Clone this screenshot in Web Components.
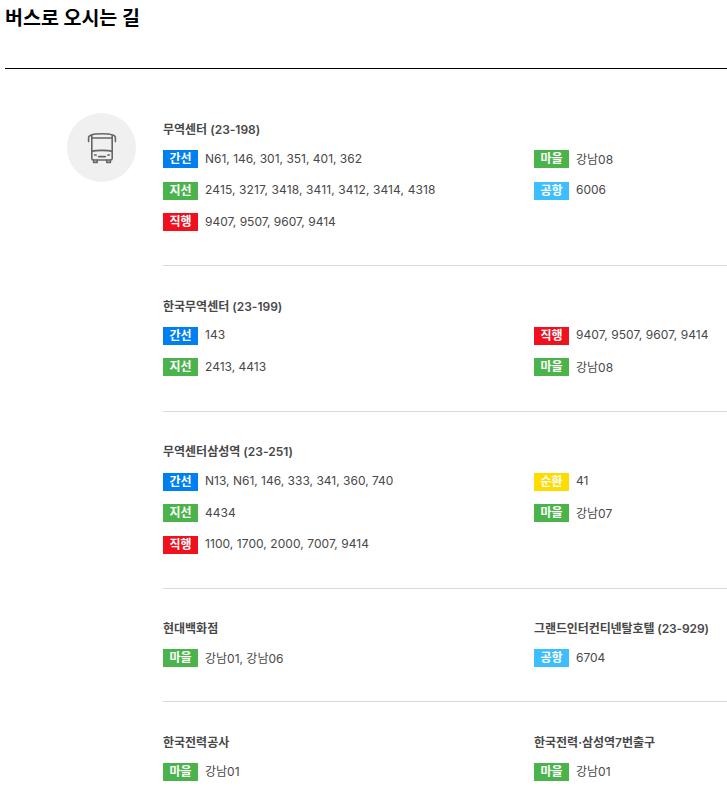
<!DOCTYPE html>
<html lang="ko">
<head>
<meta charset="utf-8">
<title>버스로 오시는 길</title>
<style>
  html, body { margin: 0; padding: 0; background: #fff; overflow: hidden; }
  body { font-family: Inter, "Noto Sans CJK KR", sans-serif; color: #484848; }
</style>
</head>
<body>
<bus-guide heading="버스로 오시는 길">
  <bus-stop-group>
    <bus-stop name="무역센터 (23-198)">
      <bus-line type="main" slot="left">N61, 146, 301, 351, 401, 362</bus-line>
      <bus-line type="branch" slot="left" style="letter-spacing:.12px">2415, 3217, 3418, 3411, 3412, 3414, 4318</bus-line>
      <bus-line type="express" slot="left">9407, 9507, 9607, 9414</bus-line>
      <bus-line type="town" slot="right">강남08</bus-line>
      <bus-line type="airport" slot="right">6006</bus-line>
    </bus-stop>
    <bus-stop name="한국무역센터 (23-199)" style="padding-bottom:21.5px;margin-bottom:30.6px">
      <bus-line type="main" slot="left">143</bus-line>
      <bus-line type="branch" slot="left">2413, 4413</bus-line>
      <bus-line type="express" slot="right" style="letter-spacing:.08px">9407, 9507, 9607, 9414</bus-line>
      <bus-line type="town" slot="right">강남08</bus-line>
    </bus-stop>
    <bus-stop name="무역센터삼성역 (23-251)" style="--name-gap:12px">
      <bus-line type="main" slot="left">N13, N61, 146, 333, 341, 360, 740</bus-line>
      <bus-line type="branch" slot="left">4434</bus-line>
      <bus-line type="express" slot="left" style="letter-spacing:.06px">1100, 1700, 2000, 7007, 9414</bus-line>
      <bus-line type="circular" slot="right">41</bus-line>
      <bus-line type="town" slot="right">강남07</bus-line>
    </bus-stop>
    <bus-stop name="현대백화점" right-name="그랜드인터컨티넨탈호텔 (23-929)" style="--right-spacing:-.1px">
      <bus-line type="town" slot="left">강남01, 강남06</bus-line>
      <bus-line type="airport" slot="right">6704</bus-line>
    </bus-stop>
    <bus-stop name="한국전력공사" right-name="한국전력·삼성역7번출구">
      <bus-line type="town" slot="left">강남01</bus-line>
      <bus-line type="town" slot="right">강남01</bus-line>
    </bus-stop>
  </bus-stop-group>
</bus-guide>

<script>
class BusGuide extends HTMLElement {
  constructor() {
    super();
    this.attachShadow({ mode: "open" }).innerHTML = `<style>
      :host { display: block; padding-left: 5px; }
      h2 {
        margin: 0;
        height: 68px;
        font-size: 19.5px;
        line-height: 36px;
        font-weight: 700;
        color: #000;
        border-bottom: 1px solid #000;
      }
    </style>
    <h2></h2>
    <slot></slot>`;
    this.shadowRoot.querySelector("h2").textContent = this.getAttribute("heading");
  }
}

class BusStopGroup extends HTMLElement {
  constructor() {
    super();
    this.attachShadow({ mode: "open" }).innerHTML = `<style>
      :host {
        display: grid;
        grid-template-columns: 69px 1fr;
        column-gap: 27px;
        padding: 44px 0 0 62px;
      }
      .icon {
        width: 69px;
        height: 69px;
        border-radius: 50%;
        background: #f0f0f0;
        display: flex;
        align-items: center;
        justify-content: center;
      }
      .stops { padding-top: 8px; }
    </style>
    <div class="icon">
      <svg width="36" height="36" viewBox="0 0 36 36" fill="none" stroke="#666" stroke-width="1.6" stroke-linejoin="round" stroke-linecap="round">
        <path d="M4.6 11.6V7.6C4.6 5 9 3.8 18 3.8S31.4 5 31.4 7.6V11.6"/>
        <path d="M7.8 5.2V28.4C7.8 29.3 8.5 30 9.4 30H26.6C27.5 30 28.2 29.3 28.2 28.4V5.2"/>
        <path d="M8 8H28"/>
        <path d="M8 21.4C12 20 24 20 28 21.4"/>
        <path d="M9.6 30V32.4H13.2V30M22.8 30V32.4H26.4V30"/>
        <path d="M14.6 26.6H21.4"/>
        <path d="M10.6 25H12.2M23.8 25H25.4"/>
      </svg>
    </div>
    <div class="stops"><slot></slot></div>`;
  }
}

class BusStop extends HTMLElement {
  constructor() {
    super();
    this.attachShadow({ mode: "open" }).innerHTML = `<style>
      :host {
        display: block;
        padding-bottom: 20.5px;
        margin-bottom: 31.6px;
        border-bottom: 1px solid #d9d9d9;
      }
      :host(:last-child) { border-bottom: 0; margin-bottom: 0; }
      .cols { display: grid; grid-template-columns: 371px 1fr; }
      .col { display: flex; flex-direction: column; }
      .name {
        font-size: 12px;
        line-height: 18px;
        font-weight: 600;
        color: #484848;
        height: 18px;
        margin-bottom: var(--name-gap, 11px);
        white-space: nowrap;
      }
      #right { letter-spacing: var(--right-spacing, 0); }
      ::slotted(bus-line) { margin-bottom: 13.5px; }
    </style>
    <div class="cols">
      <div class="col"><div class="name" id="left"></div><slot name="left"></slot></div>
      <div class="col"><div class="name" id="right"></div><slot name="right"></slot></div>
    </div>`;
    this.shadowRoot.getElementById("left").textContent = this.getAttribute("name");
    this.shadowRoot.getElementById("right").textContent = this.getAttribute("right-name") || "";
  }
}

class BusLine extends HTMLElement {
  constructor() {
    super();
    this.attachShadow({ mode: "open" }).innerHTML = `<style>
      :host {
        display: flex;
        align-items: center;
        column-gap: 7px;
        height: 18px;
        font-size: 12px;
        color: #484848;
        white-space: nowrap;
      }
      b {
        width: 35px;
        height: 18px;
        line-height: 18px;
        text-align: center;
        font-size: 12px;
        font-weight: 600;
        letter-spacing: 0;
        color: #fff;
        flex: none;
      }
      span { padding-bottom: 2px; }
    </style>
    <b></b><span><slot></slot></span>`;
    const type = BusLine.types[this.getAttribute("type")];
    const badge = this.shadowRoot.querySelector("b");
    badge.textContent = type.label;
    badge.style.background = type.color;
  }

  static types = {
    main: { label: "간선", color: "#0080f0" },
    branch: { label: "지선", color: "#4bb34b" },
    express: { label: "직행", color: "#f0101e" },
    town: { label: "마을", color: "#4bb34b" },
    airport: { label: "공항", color: "#3cbeff" },
    circular: { label: "순환", color: "#ffdc00" }
  };
}

customElements.define("bus-guide", BusGuide);
customElements.define("bus-stop-group", BusStopGroup);
customElements.define("bus-stop", BusStop);
customElements.define("bus-line", BusLine);
</script>
</body>
</html>
